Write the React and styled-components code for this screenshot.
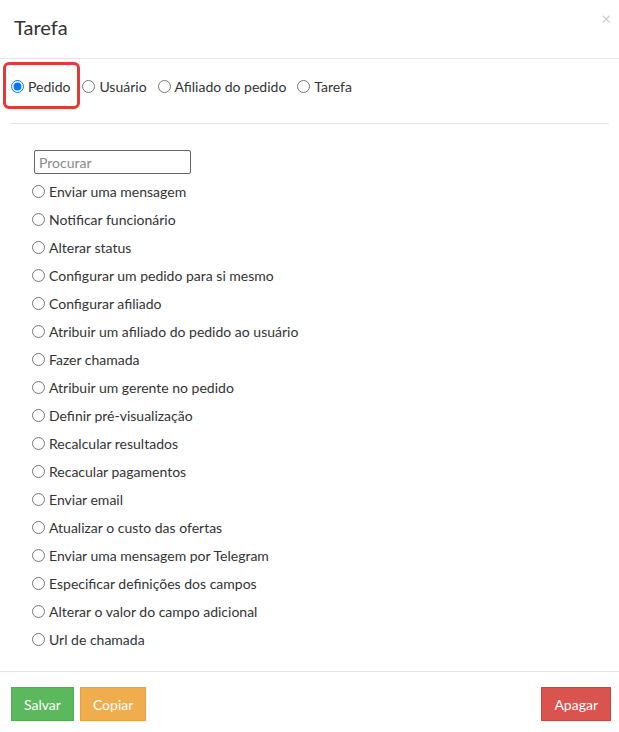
import styled, { createGlobalStyle } from "styled-components";

const GlobalStyle = createGlobalStyle`
  html, body {
    margin: 0;
    padding: 0;
    background: #fff;
  }
  body {
    font-family: Lato, "Open Sans", sans-serif;
    font-size: 14px;
    color: #333;
  }
`;

const targets = ["Pedido", "Usuário", "Afiliado do pedido", "Tarefa"];

const actions = [
  "Enviar uma mensagem",
  "Notificar funcionário",
  "Alterar status",
  "Configurar um pedido para si mesmo",
  "Configurar afiliado",
  "Atribuir um afiliado do pedido ao usuário",
  "Fazer chamada",
  "Atribuir um gerente no pedido",
  "Definir pré-visualização",
  "Recalcular resultados",
  "Recacular pagamentos",
  "Enviar email",
  "Atualizar o custo das ofertas",
  "Enviar uma mensagem por Telegram",
  "Especificar definições dos campos",
  "Alterar o valor do campo adicional",
  "Url de chamada",
];

export default function App() {
  return (
    <Modal>
      <GlobalStyle />
      <Header>
        <Title>Tarefa</Title>
        <Close>×</Close>
      </Header>
      <Body>
        <TabRow>
          {targets.map((t, i) => (
            <TabLabel key={t} highlighted={i === 0}>
              <Radio type="radio" name="target" defaultChecked={i === 0} />
              {t}
            </TabLabel>
          ))}
        </TabRow>
        <Divider />
        <ActionList>
          <Search placeholder="Procurar" />
          {actions.map((a) => (
            <ActionRow key={a}>
              <Radio type="radio" name="action" />
              {a}
            </ActionRow>
          ))}
        </ActionList>
      </Body>
      <Footer>
        <Button color="#5cb85c" border="#4cae4c">Salvar</Button>
        <Button color="#f0ad4e" border="#eea236">Copiar</Button>
        <Spacer />
        <Button color="#d9534f" border="#d43f3a">Apagar</Button>
      </Footer>
    </Modal>
  );
}

const Modal = styled.div`
  width: 619px;
  min-height: 732px;
  display: flex;
  flex-direction: column;
  background: #fff;
`;

const Header = styled.div`
  height: 59px;
  box-sizing: border-box;
  border-bottom: 1px solid #e5e5e5;
  padding: 0 8px 0 14px;
  display: flex;
  justify-content: space-between;
  align-items: flex-start;
`;

const Title = styled.h4`
  margin: 0;
  padding-top: 14px;
  font-size: 20px;
  font-weight: 400;
  line-height: 26px;
  color: #333;
`;

const Close = styled.span`
  padding-top: 9px;
  font-size: 17px;
  line-height: 20px;
  color: #000;
  opacity: 0.2;
`;

const Body = styled.div`
  padding: 3px 10px 16px;
`;

const TabRow = styled.div`
  display: flex;
  align-items: center;
  margin-left: -7px;
  height: 47px;
`;

const TabLabel = styled.label`
  display: flex;
  align-items: center;
  height: 47px;
  box-sizing: border-box;
  padding: ${({ highlighted }) => (highlighted ? "2px 7px 0 5px" : "2px 9px 0 2px")};
  border: ${({ highlighted }) => (highlighted ? "3px solid #e53935" : "none")};
  border-radius: 6px;
  color: #333;
  white-space: nowrap;
`;

const Radio = styled.input`
  width: 13px;
  height: 13px;
  margin: 0 4px 0 0;
  flex: none;
`;

const Divider = styled.hr`
  margin: 14px 0 26px;
  border: 0;
  border-top: 1px solid #e5e5e5;
`;

const ActionList = styled.div`
  padding-left: 22px;
  display: flex;
  flex-direction: column;
`;

const Search = styled.input`
  width: 157px;
  height: 24px;
  box-sizing: border-box;
  margin: 0 0 5px 2px;
  padding: 2px 4px;
  border: 1px solid #666;
  border-radius: 2px;
  font-family: Lato, "Open Sans", sans-serif;
  font-size: 14px;
  color: #333;

  &::placeholder {
    color: #8a8a8a;
  }
`;

const ActionRow = styled.label`
  display: flex;
  align-items: center;
  height: 28px;
  color: #333;
  margin-top: -2px;
  margin-bottom: 2px;
`;

const Footer = styled.div`
  border-top: 1px solid #e5e5e5;
  padding: 15px 8px 12px 11px;
  display: flex;
  gap: 6px;
`;

const Spacer = styled.div`
  flex: 1;
`;

const Button = styled.button`
  height: 34px;
  padding: 0 12px;
  background: ${({ color }) => color};
  border: 1px solid ${({ border }) => border};
  border-radius: 0;
  color: #fff;
  font-family: Lato, "Open Sans", sans-serif;
  font-size: 14px;
`;
